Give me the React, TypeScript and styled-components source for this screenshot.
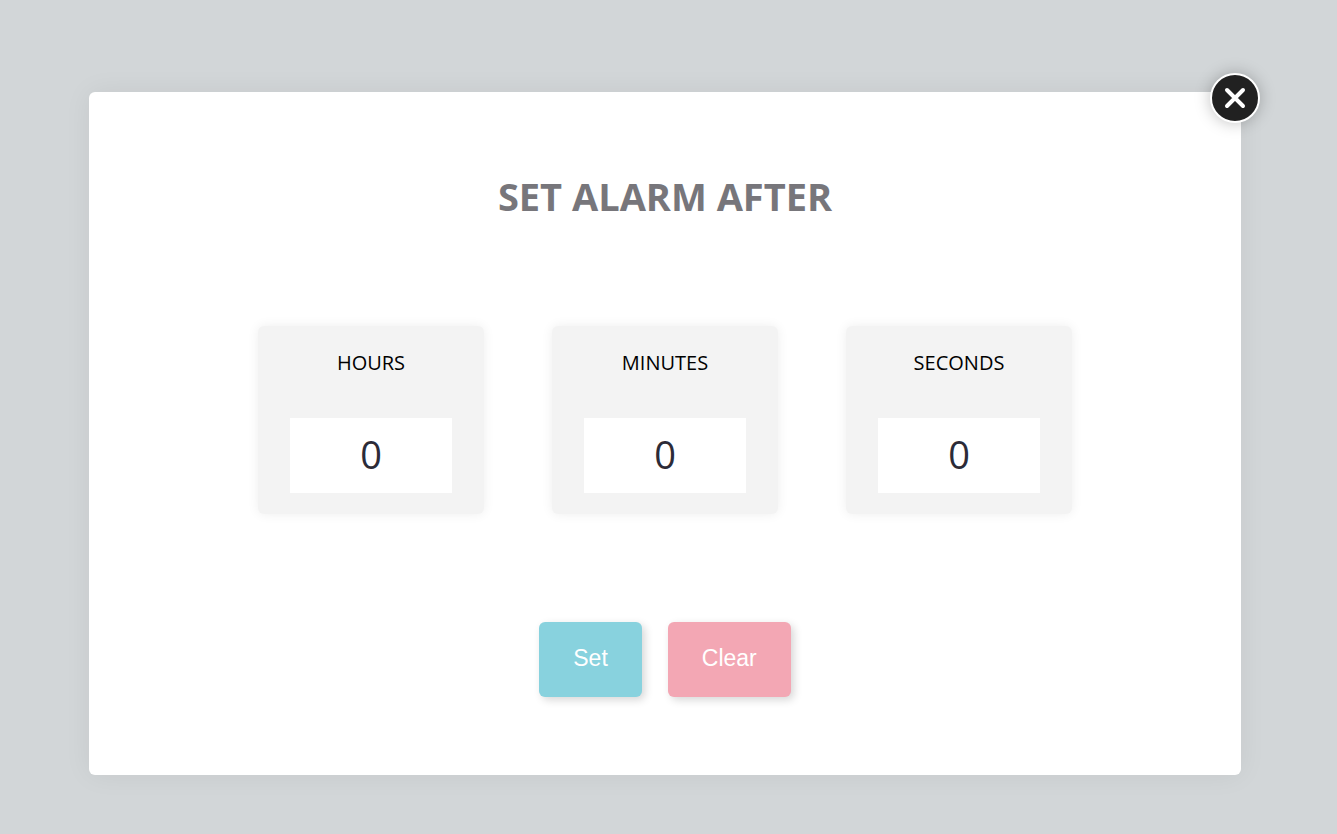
import React, { useState } from "react";
import styled, { createGlobalStyle } from "styled-components";

const GlobalStyle = createGlobalStyle`
  * { box-sizing: border-box; }
  body {
    margin: 0;
    background: #d2d6d8;
    font-family: "Open Sans", "Noto Sans", sans-serif;
  }
`;

const Page = styled.main`
  min-height: 100vh;
  padding: 92px 96px 59px 89px;
`;

const Dialog = styled.form`
  position: relative;
  display: flex;
  flex-direction: column;
  align-items: center;
  padding: 78px 24px;
  border-radius: 6px;
  background: #fff;
  box-shadow: 0 0 28px rgba(0, 0, 0, 0.06);
`;

const CloseButton = styled.button`
  position: absolute;
  top: -19px;
  right: -19px;
  display: grid;
  place-items: center;
  width: 50px;
  height: 50px;
  padding: 0;
  border: 2px solid #fff;
  border-radius: 50%;
  background: #212121;
  color: #fff;
  box-shadow: 0 0 16px rgba(0, 0, 0, 0.25);
  cursor: pointer;
`;

const Title = styled.h1`
  margin: 0;
  color: #77767b;
  font-size: 38px;
  line-height: 52px;
  font-weight: 700;
`;

const Fields = styled.div`
  display: flex;
  flex-wrap: wrap;
  justify-content: center;
  gap: 68px;
  margin: 104px 0 108px;
`;

const Field = styled.label`
  display: flex;
  flex-direction: column;
  align-items: center;
  gap: 40px;
  width: 226px;
  padding: 22px 32px 21px;
  border-radius: 6px;
  background: #f3f3f3;
  box-shadow: 0 0 12px rgba(0, 0, 0, 0.07);
`;

const FieldName = styled.span`
  color: #000;
  font-size: 20px;
  line-height: 30px;
  font-weight: 500;
`;

const NumberInput = styled.input`
  width: 100%;
  height: 75px;
  padding: 0 0 4px;
  border: 0;
  background: #fff;
  color: #2c2b37;
  font: 400 38px "Open Sans", "Noto Sans", sans-serif;
  text-align: center;
`;

const Actions = styled.div`
  display: flex;
  gap: 26px;
`;

const ActionButton = styled.button<{ $color: string }>`
  height: 75px;
  padding: 0 34px 2px;
  border: 0;
  border-radius: 6px;
  background: ${({ $color }) => $color};
  color: #fff;
  font: 400 23px "Liberation Sans", Arial, sans-serif;
  box-shadow: 3px 3px 8px rgba(0, 0, 0, 0.16);
  cursor: pointer;
`;

const units = ["HOURS", "MINUTES", "SECONDS"];

export default function App() {
  const [values, setValues] = useState(["0", "0", "0"]);

  return (
    <>
      <GlobalStyle />
      <Page>
        <Dialog onSubmit={(event) => event.preventDefault()}>
          <CloseButton type="button" aria-label="Close">
            <svg width="22" height="22" viewBox="0 0 22 22" fill="none" stroke="currentColor" strokeWidth="4" strokeLinecap="round">
              <path d="M3 3l16 16M19 3L3 19" />
            </svg>
          </CloseButton>
          <Title>SET ALARM AFTER</Title>
          <Fields>
            {units.map((unit, index) => (
              <Field key={unit}>
                <FieldName>{unit}</FieldName>
                <NumberInput
                  inputMode="numeric"
                  value={values[index]}
                  onChange={(event) => {
                    const next = event.target.value;
                    setValues((current) => current.map((v, i) => (i === index ? next : v)));
                  }}
                />
              </Field>
            ))}
          </Fields>
          <Actions>
            <ActionButton type="submit" $color="#88d2de">Set</ActionButton>
            <ActionButton type="button" $color="#f3a7b4" onClick={() => setValues(["0", "0", "0"])}>
              Clear
            </ActionButton>
          </Actions>
        </Dialog>
      </Page>
    </>
  );
}
